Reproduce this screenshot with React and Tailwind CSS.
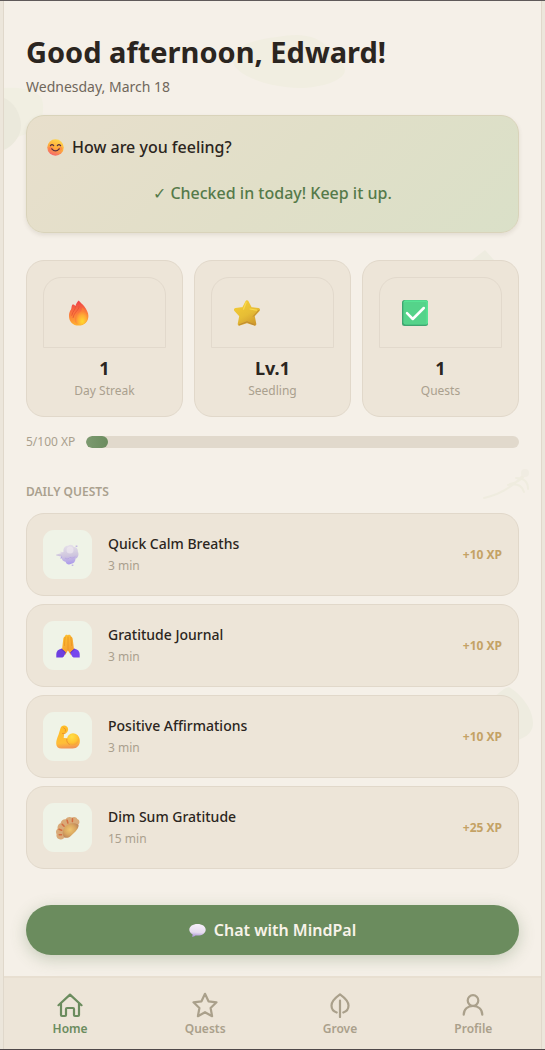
import React from "react";

function Smile() {
  return (
    <svg viewBox="0 0 32 32" className="size-[17px] shrink-0" aria-hidden="true">
      <defs>
        <linearGradient id="smA" x1="0.7" y1="0" x2="0.3" y2="1">
          <stop offset="0" stopColor="#ffd84d" />
          <stop offset="0.5" stopColor="#ffae3b" />
          <stop offset="1" stopColor="#f4616e" />
        </linearGradient>
      </defs>
      <circle cx="16" cy="16" r="15.5" fill="url(#smA)" />
      <circle cx="7" cy="18" r="4" fill="#ff6a4a" opacity="0.45" />
      <circle cx="25" cy="18" r="4" fill="#ff6a4a" opacity="0.45" />
      <path d="M6.5 12.5q3-4 6 0M19.5 12.5q3-4 6 0M9 18.5q7 8 14 0" fill="none" stroke="#573040" strokeWidth="2.4" strokeLinecap="round" />
    </svg>
  );
}

function Flame() {
  return (
    <svg viewBox="0 0 26 26" className="size-[26px]" aria-hidden="true">
      <defs>
        <linearGradient id="flA" x1="0.5" y1="0" x2="0.6" y2="1">
          <stop offset="0" stopColor="#ee3f4a" />
          <stop offset="0.5" stopColor="#fb7a3c" />
          <stop offset="1" stopColor="#ffb52e" />
        </linearGradient>
        <radialGradient id="flB" cx="0.6" cy="0.8" r="0.6">
          <stop offset="0" stopColor="#ffd92f" />
          <stop offset="0.6" stopColor="#ffac35" />
          <stop offset="1" stopColor="#fb8038" />
        </radialGradient>
      </defs>
      <path d="M12.700.4C11 2 9.800 3.900 9.400 6.300 8.600 4.600 7.300 4 6.300 4.700 5.500 5.700 5.700 7.700 5 9.600 3.700 11.300 3 13.500 3 16c0 5.800 4 9.600 9.500 9.600 5.900 0 9.900-3.900 9.900-9.600 0-3.400-1.800-6.600-4-9.600C16.500 4 14.500 2.700 12.700.4Z" fill="url(#flA)" />
      <path d="M16.300 7.500c.2 4.100-4.600 5.700-6.600 9.200-2 3.500-.3 7.800 4 8.200 4.300.3 7.600-2.700 7.600-7.600 0-3.800-2.400-7.500-5-9.800Z" fill="url(#flB)" />
      <path d="M9.600 6.300c.2 3.100-3 4.700-3.800 9M13 6.500c.2 3.900-5 5.500-5.900 11" fill="none" stroke="#e95135" strokeWidth="1" strokeLinecap="round" opacity="0.8" />
    </svg>
  );
}

function GoldStar() {
  return (
    <svg viewBox="0 0 26 26" className="size-[26px]" aria-hidden="true">
      <defs>
        <linearGradient id="stA" x1="0.2" y1="0" x2="0.8" y2="1">
          <stop offset="0" stopColor="#f3ca35" />
          <stop offset="0.55" stopColor="#e6bd35" />
          <stop offset="1" stopColor="#d09a2e" />
        </linearGradient>
      </defs>
      <path d="M13 2 16.500 8.700 24.300 9.800 19 15.700 20.600 24 13 21.300 5.400 24 7 15.700 1.700 9.800 9.500 8.700Z" fill="url(#stA)" stroke="url(#stA)" strokeWidth="3.400" strokeLinejoin="round" />
      <path d="m12.200 2.200-2.700 7M16 9l6.500 1.200" fill="none" stroke="#f9d94d" strokeWidth="1.200" strokeLinecap="round" />
      <path d="m5.300 24.800 7.700-3 7.400 3M24.600 10.500l-5.200 5.800" fill="none" stroke="#be8a35" strokeWidth="1" strokeLinecap="round" />
    </svg>
  );
}

function GreenCheck() {
  return (
    <svg viewBox="0 0 26 26" className="size-[26px]" aria-hidden="true">
      <rect width="26" height="26" rx="2.500" fill="#3fa570" />
      <rect x="1.500" y="0.300" width="24.500" height="24.300" rx="2" fill="#58e394" />
      <rect x="2" y="2" width="22.500" height="22" rx="1" fill="#55d38a" />
      <path d="m5 13.200 5.800 5.800L21.800 8" fill="none" stroke="#fff" strokeWidth="2.500" strokeLinecap="round" strokeLinejoin="round" />
    </svg>
  );
}

function Breath() {
  return (
    <svg viewBox="0 0 24 24" className="size-6" aria-hidden="true">
      <defs>
        <linearGradient id="brA" x1="0.4" y1="0" x2="0.5" y2="1">
          <stop offset="0" stopColor="#e5e0e9" />
          <stop offset="0.55" stopColor="#cfc6de" />
          <stop offset="1" stopColor="#a997ec" />
        </linearGradient>
      </defs>
      <g fill="url(#brA)">
        <path d="M.2 11.600 5 10.300l-1-1.800L9 9.500v5.400l-4.800.7 1-2L.2 12.500Z" />
        <path d="M7.500 8.700C7 5 9 2.500 12 2.700c2-1.500 5-1 5.800 1.200 2.500-.1 4.400 1.700 4 4.500 1.400 2.500.7 6-2.200 7.200-.2 3-1.800 5-4.300 5.200-2.600 1.700-5.300.3-5.700-2-3.200-.5-4.500-3-3.300-5.200-.9-1.700-.3-4 1.200-4.900Z" />
        <circle cx="20.500" cy="3" r="1.100" />
        <circle cx="16.500" cy="22" r="1" />
      </g>
      <circle cx="14" cy="7" r="3.500" fill="#efeaf0" opacity="0.650" />
      <path d="M9 15c1.500 1.500 4 1 5-.7 2 1.200 4 .7 5.300-.8" fill="none" stroke="#b2a0e1" strokeWidth="0.900" opacity="0.700" />
    </svg>
  );
}

function Praying() {
  return (
    <svg viewBox="0 0 24 24" className="size-6" aria-hidden="true">
      <defs>
        <linearGradient id="prA" x1="0" y1="0" x2="0.5" y2="1">
          <stop offset="0" stopColor="#ffc52d" />
          <stop offset="1" stopColor="#f59a35" />
        </linearGradient>
      </defs>
      <path d="M11.800 1.200c-1.200-.9-2.700-.3-2.900 1.200C7.600 2.800 7.300 4 7.200 5.500l-1 8.500-.8 3.300 3.800 3.600 2.700-4.500 2.900 4.500 3.800-3.600-.8-3.300-1-8.500c-.1-1.500-.5-2.700-1.800-3.100-.2-1.500-1.800-2.100-3.200-1.200Z" fill="url(#prA)" />
      <path d="M12 3v13M9.100 3.200l-.7 8.400M14.900 3.200l.7 8.400" fill="none" stroke="#e99425" strokeWidth="0.800" strokeLinecap="round" />
      <path d="M5.200 14.800c1.800.8 3.300 2.300 4.500 4L7.800 22.500 6.500 23.600H.3v-3.500c0-2.700 2-4.800 4.900-5.300Z" fill="#6d3fe0" />
      <path d="M18.800 14.800c-1.800.8-3.300 2.300-4.500 4l1.900 3.700 1.300 1.100h6.200v-3.500c0-2.700-2-4.800-4.900-5.300Z" fill="#7647ee" />
      <path d="m5.200 14.800 4.500 4M18.800 14.800l-4.500 4" stroke="#5328ba" strokeWidth="0.800" />
    </svg>
  );
}

function Biceps() {
  return (
    <svg viewBox="0 0 24 24" className="size-6" aria-hidden="true">
      <defs>
        <linearGradient id="biA" x1="0.4" y1="0" x2="0.5" y2="1">
          <stop offset="0" stopColor="#ffbd27" />
          <stop offset="0.750" stopColor="#ffbe38" />
          <stop offset="1" stopColor="#f19254" />
        </linearGradient>
        <radialGradient id="biB" cx="0.400" cy="0.300" r="0.700">
          <stop offset="0" stopColor="#ffdf46" />
          <stop offset="0.700" stopColor="#ffc332" />
          <stop offset="1" stopColor="#f5a33a" />
        </radialGradient>
      </defs>
      <path d="M4.400 3.500C4.800 1.700 6.500.4 8.200.5c1.900.1 3.700 1.300 3.900 3.400.1 2.400-1.500 4.700-3.900 4.700l-.5 4.300 4 .3c1.300-2.300 3.400-4 6.300-4 3.500 0 5.900 2.900 5.900 6.700 0 4.300-2.800 7.500-7.300 7.500H5.400C2 23.400.2 21.400.2 18.400c0-2.700 1-5.700 2.300-8.600L4.400 3.500Z" fill="url(#biA)" />
      <circle cx="17" cy="14.200" r="6" fill="url(#biB)" />
      <path d="M6.500 8.500 9 8.300M7.600 2.800l2 1.500-.3 2M10.800 14.200c-.3 2.300.5 4.200 2.500 5.200" fill="none" stroke="#e9902b" strokeWidth="0.900" strokeLinecap="round" />
    </svg>
  );
}

function Dumpling() {
  return (
    <svg viewBox="0 0 24 24" className="size-6" aria-hidden="true">
      <defs>
        <radialGradient id="duA" cx="0.450" cy="0.450" r="0.600">
          <stop offset="0" stopColor="#efc66f" />
          <stop offset="0.600" stopColor="#d9a660" />
          <stop offset="1" stopColor="#bd8558" />
        </radialGradient>
      </defs>
      <path d="M3.500 23.300C1.300 22.700-.1 20.500.6 18.300-.4 16.300-.1 14 1.600 12.700c-.5-2.500 1-4.800 3-5.400C5.200 4.500 7.400 3 9.600 3.300c1.500-2.500 4.500-3 6.300-1.700 2.200-1.200 4.600-.4 5.300 1.300 2 .5 2.700 2.600 1.900 4.600L7.500 22.600c-1.300 1.100-2.700 1.200-4 .7Z" fill="#d9aa78" />
      <path d="M7.300 19.700C5.500 15.500 8 10.300 12.300 8.300c3.800-1.800 8.200-.9 10.300.5.2 2.300-1.100 4.600-3.100 6.700l-5 4.700c-2.300 2-5.800 2.500-7.200-.5Z" fill="url(#duA)" />
      <path d="m3.200 18.700 2.300.1M3 13.200l2.700 1M6.200 8.300l1.900 2M11.100 4.300l.8 2.800M16.500 2.700l-.1 2.900" fill="none" stroke="#d46c3f" strokeWidth="1.500" strokeLinecap="round" />
    </svg>
  );
}

function Speech() {
  return (
    <svg viewBox="0 0 17 17" className="size-[17px] shrink-0" aria-hidden="true">
      <defs>
        <linearGradient id="spA" x1="0.500" y1="0" x2="0.400" y2="1">
          <stop offset="0" stopColor="#f6effa" />
          <stop offset="0.650" stopColor="#e6dcef" />
          <stop offset="1" stopColor="#ab92d8" />
        </linearGradient>
      </defs>
      <path d="M8.500 2c4.700 0 8.200 2.400 8.200 5.700s-3.500 5.900-8.200 5.900c-.7 0-1.400 0-2-.2-.8.9-2.100 1.300-3.600 1.300.6-.8.800-1.600.6-2.400C1.500 11.200.3 9.600.3 7.700.3 4.400 3.800 2 8.500 2Z" fill="url(#spA)" />
    </svg>
  );
}

const stats = [
  { icon: Flame, value: "1", label: "Day Streak" },
  { icon: GoldStar, value: "Lv.1", label: "Seedling" },
  { icon: GreenCheck, value: "1", label: "Quests" },
];

const quests = [
  { icon: Breath, title: "Quick Calm Breaths", time: "3 min", xp: "+10 XP" },
  { icon: Praying, title: "Gratitude Journal", time: "3 min", xp: "+10 XP" },
  { icon: Biceps, title: "Positive Affirmations", time: "3 min", xp: "+10 XP" },
  { icon: Dumpling, title: "Dim Sum Gratitude", time: "15 min", xp: "+25 XP" },
];

const tabs = [
  { label: "Home", d: "M1.500 13.200 13 2.600l11.500 10.600M4 11.500V23q0 1 1 1h3q1 0 1-1v-6q0-1 1-1h6q1 0 1 1v6q0 1 1 1h3q1 0 1-1V11.500", active: true },
  { label: "Quests", d: "m13 1.800 3.500 7.500 8 1-5.900 5.700 1.500 8.200-7.100-4-7.100 4L7.400 16 1.500 10.300l8-1Z" },
  { label: "Grove", d: "M9.700 20.500C6.500 19.500 4.500 16.900 4.500 13.500c0-3.900 3.500-7.500 8.500-11.100 5 3.600 8.500 7.200 8.500 11.100 0 3.400-2 6-5.200 7M13 8.500V25" },
  { label: "Profile", d: "M18.300 8.500a5.300 5.300 0 1 1-10.600 0 5.300 5.300 0 0 1 10.600 0ZM3.700 22.700c0-5.300 4-8.900 9.300-8.900s9.300 3.600 9.300 8.900" },
];

function Scenery() {
  return (
    <div className="pointer-events-none absolute inset-0 -z-10 overflow-hidden" aria-hidden="true">
      <svg className="absolute left-0 top-[86px] h-16 w-10" viewBox="0 0 40 64">
        <path d="M0 1c14-1 30 1 37 9 5 10 1 28-8 34-8 4-18 7-29 8Z" fill="#f1efe2" />
        <path d="M0 11c10 4 17 16 17 28 0 10-8 20-17 24Z" fill="#ebe9dc" />
      </svg>
      <svg className="absolute left-[228px] top-8 h-14 w-[114px]" viewBox="0 0 114 56">
        <path d="M1 27C3 12 20 7 45 4c25-5 42-1 52 12 8 9 16 16 16 21 0 10-22 18-47 18S0 43 1 27Z" fill="#f1eee1" />
      </svg>
      <svg className="absolute right-[46px] top-[248px] h-6 w-6" viewBox="0 0 24 24">
        <path d="m0 12 14-11 9 10-5 8Z" fill="#eeece0" />
      </svg>
      <svg className="absolute right-2.5 top-[466px] h-9 w-12" viewBox="0 0 48 36">
        <path d="M1 31C20 27 33 17 43 5M25 18q13-3 16 7M33 11q12 0 12 11M27 17q10-2 15-9" fill="none" stroke="#efecdf" strokeWidth="2" strokeLinecap="round" />
        <circle cx="42" cy="6" r="4" fill="#f0ece2" />
      </svg>
      <svg className="absolute right-2 top-[685px] h-14 w-10" viewBox="0 0 40 56">
        <path d="M0 12C7 6 11 2 16 1c12 7 24 22 24 36 0 9-6 14-15 17C10 42 2 27 0 12Z" fill="#eeece0" />
      </svg>
    </div>
  );
}

export default function App() {
  return (
    <div className="flex min-h-screen flex-col border-y border-t-[#5f5a5a] border-b-[#4f4849] bg-[#ece6db] px-[3px] font-['Noto_Sans','Open_Sans',sans-serif] text-[#2b2520]">
      <div className="relative isolate flex grow flex-col border-x border-[#e0d8cb] bg-[#f5f0e8]">
        <Scenery />
        <main className="flex grow flex-col px-[22px] pt-8">
          <h1 className="text-[29px] leading-[38px] font-bold">Good afternoon, Edward!</h1>
          <p className="mt-[5px] text-[14px] leading-[22px] text-[#70675b]">Wednesday, March 18</p>

          <section className="mt-[17px] rounded-[18px] border border-[#d9d3ba] bg-linear-[135deg] from-[#e8dfcc] via-[#e1dfc8] to-[#dae0c8] px-5 pt-[19px] pb-[27px] shadow-[0_2px_4px_rgba(60,50,20,0.1)]">
            <h2 className="flex items-center gap-2 text-[16px] leading-6 font-medium">
              <Smile />
              How are you feeling?
            </h2>
            <p className="mt-[22px] text-center text-[16px] leading-6 font-medium text-[#557a4a]">✓ Checked in today! Keep it up.</p>
          </section>

          <section className="mt-[27px] grid grid-cols-3 gap-[11px]">
            {stats.map(({ icon: Icon, value, label }) => (
              <div key={label} className="rounded-[18px] border border-[#e1d8ca] bg-[#ede5d8] p-4 text-center">
                <div className="rounded-t-[18px] border border-[#e2d9cc] px-[22px] pt-[22px] pb-[21px]">
                  <Icon />
                </div>
                <div className="mt-[7px] text-[18px] leading-[26px] font-bold">{value}</div>
                <div className="mt-px text-[12px] leading-[18px] text-[#aaa08e]">{label}</div>
              </div>
            ))}
          </section>

          <div className="mt-4 flex items-center gap-[11px] text-[12px] leading-[18px] text-[#aaa08e]">
            <span>5/100 XP</span>
            <div role="progressbar" aria-label="Experience" aria-valuenow={5} aria-valuemin={0} aria-valuemax={100} className="h-3 grow overflow-hidden rounded-full bg-[#e1d9cc]">
              <div className="h-full w-[5%] rounded-full bg-linear-to-r from-[#7c9a70] to-[#6b8c5e]" />
            </div>
          </div>

          <h2 className="mt-8 text-[12px] leading-[18px] font-semibold text-[#aaa08e]">DAILY QUESTS</h2>
          <ul className="mt-3 flex flex-col gap-2">
            {quests.map(({ icon: Icon, title, time, xp }) => (
              <li key={title}>
                <button type="button" className="flex w-full items-center gap-4 rounded-[18px] border border-[#e1d8ca] bg-[#ede5d8] p-4 text-left">
                  <span className="grid size-[49px] shrink-0 place-items-center rounded-[11px] bg-[#eff3e7]">
                    <Icon />
                  </span>
                  <span className="grow">
                    <span className="block text-[14px] leading-[22px] font-medium">{title}</span>
                    <span className="mt-px block text-[12px] leading-5 text-[#aaa08e]">{time}</span>
                  </span>
                  <span className="text-[12px] font-bold text-[#c4a265]">{xp}</span>
                </button>
              </li>
            ))}
          </ul>

          <button type="button" className="mt-9 mb-[21px] flex h-[50px] items-center justify-center gap-2 rounded-full bg-[#6b8c5e] text-[16px] leading-6 font-semibold text-[#f8f3e9] shadow-[0_4px_16px_rgba(90,120,75,0.3)]">
            <Speech />
            Chat with MindPal
          </button>
        </main>

        <nav className="flex justify-around border-t-2 border-[#e8dfd1] bg-[#ede5d8] pt-3.5 pb-[11px]">
          {tabs.map(({ label, d, active }) => (
            <a key={label} href={"#" + label.toLowerCase()} aria-current={active ? "page" : undefined} className={active ? "flex flex-col items-center gap-0.5 text-[#6b8c5e]" : "flex flex-col items-center gap-0.5 text-[#aaa08b]"}>
              <svg viewBox="0 0 26 26" className="size-[26px]" fill="none" stroke="currentColor" strokeWidth="2.200" strokeLinecap="round" strokeLinejoin="round" aria-hidden="true">
                <path d={d} />
              </svg>
              <span className="text-[12px] leading-[18px] font-semibold">{label}</span>
            </a>
          ))}
        </nav>
      </div>
    </div>
  );
}
